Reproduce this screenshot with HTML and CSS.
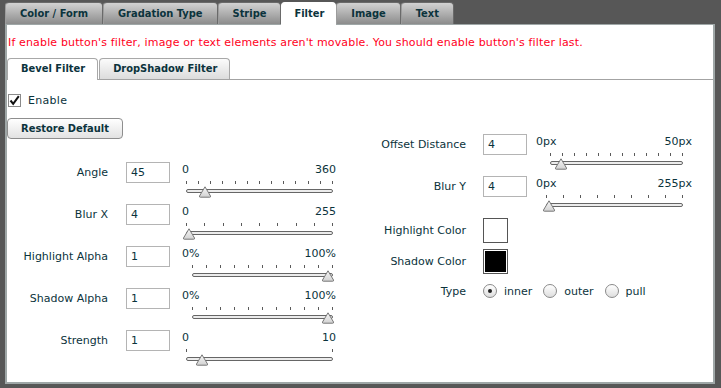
FILE: index.html
```html
<!DOCTYPE html>
<html>
<head>
<meta charset="utf-8">
<link rel="stylesheet" href="styles.css">
</head>
<body>
<div class="app">
  <div class="tabs">
    <div class="tab">Color / Form</div>
    <div class="tab">Gradation Type</div>
    <div class="tab">Stripe</div>
    <div class="tab active">Filter</div>
    <div class="tab">Image</div>
    <div class="tab">Text</div>
  </div>
  <div class="panel">
    <p class="msg">If enable button's filter, image or text elements aren't movable. You should enable button's filter last.</p>
    <div class="subtabs">
      <div class="subtab active">Bevel Filter</div>
      <div class="subtab">DropShadow Filter</div>
    </div>
    <div class="content">
      <div class="col-left">
        <label class="check">
          <span class="box"><svg width="11" height="11" viewBox="0 0 11 11"><path d="M1.5 5.5 L4.2 8.8 L9.8 1.2" fill="none" stroke="#111" stroke-width="2"/></svg></span>
          <span>Enable</span>
        </label>
        <button class="btn">Restore Default</button>
        <div class="rows">
          <div class="row">
            <div class="lbl">Angle</div>
            <div class="inp">45</div>
            <div class="slider">
              <div class="sl-labels"><span>0</span><span>360</span></div>
              <div class="scale">
                <div class="ticks"><i></i><i></i><i></i><i></i><i></i><i></i><i></i><i></i><i></i><i></i><i></i><i></i><i></i></div>
                <div class="track"><span class="thumb" style="left:12.5%"><svg width="13" height="12" viewBox="0 0 13 12"><path d="M6.5 0.8 L12 10 Q12.4 11.2 11.2 11.2 L1.8 11.2 Q0.6 11.2 1 10 Z" fill="url(#g)" stroke="#777" stroke-width="1"/></svg></span></div>
              </div>
            </div>
          </div>
          <div class="row">
            <div class="lbl">Blur X</div>
            <div class="inp">4</div>
            <div class="slider">
              <div class="sl-labels"><span>0</span><span>255</span></div>
              <div class="scale">
                <div class="ticks"><i></i><i></i><i></i><i></i><i></i><i></i><i></i><i></i><i></i></div>
                <div class="track"><span class="thumb" style="left:1.57%"><svg width="13" height="12" viewBox="0 0 13 12"><path d="M6.5 0.8 L12 10 Q12.4 11.2 11.2 11.2 L1.8 11.2 Q0.6 11.2 1 10 Z" fill="url(#g)" stroke="#777" stroke-width="1"/></svg></span></div>
              </div>
            </div>
          </div>
          <div class="row">
            <div class="lbl">Highlight Alpha</div>
            <div class="inp">1</div>
            <div class="slider pct">
              <div class="sl-labels"><span>0%</span><span>100%</span></div>
              <div class="scale">
                <div class="ticks"><i></i><i></i><i></i><i></i><i></i><i></i><i></i><i></i><i></i><i></i><i></i></div>
                <div class="track"><span class="thumb" style="left:97%"><svg width="13" height="12" viewBox="0 0 13 12"><path d="M6.5 0.8 L12 10 Q12.4 11.2 11.2 11.2 L1.8 11.2 Q0.6 11.2 1 10 Z" fill="url(#g)" stroke="#777" stroke-width="1"/></svg></span></div>
              </div>
            </div>
          </div>
          <div class="row">
            <div class="lbl">Shadow Alpha</div>
            <div class="inp">1</div>
            <div class="slider pct">
              <div class="sl-labels"><span>0%</span><span>100%</span></div>
              <div class="scale">
                <div class="ticks"><i></i><i></i><i></i><i></i><i></i><i></i><i></i><i></i><i></i><i></i><i></i></div>
                <div class="track"><span class="thumb" style="left:97%"><svg width="13" height="12" viewBox="0 0 13 12"><path d="M6.5 0.8 L12 10 Q12.4 11.2 11.2 11.2 L1.8 11.2 Q0.6 11.2 1 10 Z" fill="url(#g)" stroke="#777" stroke-width="1"/></svg></span></div>
              </div>
            </div>
          </div>
          <div class="row">
            <div class="lbl">Strength</div>
            <div class="inp">1</div>
            <div class="slider">
              <div class="sl-labels"><span>0</span><span>10</span></div>
              <div class="scale">
                <div class="ticks"><i></i><i></i></div>
                <div class="track"><span class="thumb" style="left:10%"><svg width="13" height="12" viewBox="0 0 13 12"><path d="M6.5 0.8 L12 10 Q12.4 11.2 11.2 11.2 L1.8 11.2 Q0.6 11.2 1 10 Z" fill="url(#g)" stroke="#777" stroke-width="1"/></svg></span></div>
              </div>
            </div>
          </div>
        </div>
      </div>
      <div class="col-right">
        <div class="row r">
          <div class="lbl">Offset Distance</div>
          <div class="inp">4</div>
          <div class="slider px1">
            <div class="sl-labels"><span>0px</span><span>50px</span></div>
            <div class="scale">
              <div class="ticks"><i></i><i></i><i></i><i></i><i></i><i></i><i></i><i></i><i></i><i></i><i></i><i></i></div>
              <div class="track"><span class="thumb" style="left:8%"><svg width="13" height="12" viewBox="0 0 13 12"><path d="M6.5 0.8 L12 10 Q12.4 11.2 11.2 11.2 L1.8 11.2 Q0.6 11.2 1 10 Z" fill="url(#g)" stroke="#777" stroke-width="1"/></svg></span></div>
            </div>
          </div>
        </div>
        <div class="row r">
          <div class="lbl">Blur Y</div>
          <div class="inp">4</div>
          <div class="slider px2">
            <div class="sl-labels"><span>0px</span><span>255px</span></div>
            <div class="scale">
              <div class="ticks"><i></i><i></i><i></i><i></i><i></i><i></i><i></i><i></i><i></i></div>
              <div class="track"><span class="thumb" style="left:1.57%"><svg width="13" height="12" viewBox="0 0 13 12"><path d="M6.5 0.8 L12 10 Q12.4 11.2 11.2 11.2 L1.8 11.2 Q0.6 11.2 1 10 Z" fill="url(#g)" stroke="#777" stroke-width="1"/></svg></span></div>
            </div>
          </div>
        </div>
        <div class="crow">
          <div class="lbl">Highlight Color</div>
          <div class="swatch"><span class="fill white"></span></div>
        </div>
        <div class="crow">
          <div class="lbl">Shadow Color</div>
          <div class="swatch"><span class="fill black"></span></div>
        </div>
        <div class="trow">
          <div class="lbl">Type</div>
          <div class="radios">
            <span class="radio on"></span><span class="rtext">inner</span>
            <span class="radio"></span><span class="rtext">outer</span>
            <span class="radio"></span><span class="rtext">pull</span>
          </div>
        </div>
      </div>
    </div>
  </div>
</div>
<svg width="0" height="0" class="defs">
  <defs>
    <linearGradient id="g" x1="0" y1="0" x2="0" y2="1">
      <stop offset="0" stop-color="#f6f6f6"/>
      <stop offset="1" stop-color="#d2d2d2"/>
    </linearGradient>
  </defs>
</svg>
</body>
</html>
```
FILE: styles.css
```css
* { box-sizing: border-box; }
html, body { margin: 0; }
body {
  background: #575757;
  font-family: "DejaVu Sans", Verdana, sans-serif;
  font-size: 11px;
  color: #0b333c;
  width: 721px;
  height: 388px;
  overflow: hidden;
}
.defs { position: absolute; }
.app { padding: 2px 0 0 5px; width: 715px; }
.tabs { display: flex; height: 22px; }
.tab, .subtab, .btn {
  font-family: "DejaVu Sans Condensed", "DejaVu Sans", sans-serif;
  font-stretch: condensed;
  font-weight: bold;
  font-size: 11px;
}
.tab {
  height: 22px;
  padding: 0 14px;
  line-height: 22px;
  border: 1px solid #6a6a6a;
  border-bottom: 0;
  border-left-color: #9c9c9c;
  border-radius: 4px 4px 0 0;
  background: linear-gradient(#d2d2d2, #8c8c8c);
}
.tab.active {
  background: #fff;
  border-color: #fff;
  padding: 0 11px 0 12px;
  height: 23px;
  position: relative;
  z-index: 1;
}
.panel {
  height: 360px;
  background: #fff;
  border: 2px solid #9fa7a7;
  border-top: 1px solid #9fa7a7;
}
.msg {
  margin: 11px 0 0 1px;
  line-height: 14px;
  letter-spacing: 0.15px;
  color: #ff0022;
}
.subtabs {
  margin-top: 8px;
  display: flex;
  height: 22px;
  border-bottom: 1px solid #a3a3a3;
}
.subtab {
  height: 21px;
  padding: 0 12px 0 13px;
  line-height: 20px;
  border: 1px solid #a8a8a8;
  border-bottom: 0;
  border-radius: 4px 4px 0 0;
  background: linear-gradient(#fbfbfb, #dcdcdc);
  margin-right: 1px;
}
.subtab.active {
  background: #fff;
  height: 22px;
  position: relative;
  z-index: 1;
}
.content {
  display: grid;
  grid-template-columns: 363px 1fr;
}
.col-left { padding-top: 14px; display: flex; flex-direction: column; align-items: flex-start; }
.check { display: flex; align-items: center; gap: 7px; margin-left: 1px; height: 13px; letter-spacing: 0.3px; }
.box {
  width: 13px; height: 13px;
  border: 1px solid #8a8a8a;
  background: #fff;
  display: flex; align-items: center; justify-content: center;
}
.btn {
  margin-top: 11px;
  width: 116px; height: 21px;
  color: #0b333c;
  border: 1px solid #8e8e8e;
  border-radius: 4px;
  background: linear-gradient(#ffffff, #e2e2e2);
  padding: 0;
}
.rows { margin-top: 23px; }
.row { display: flex; height: 42px; align-items: flex-start; }
.lbl { width: 101px; text-align: right; line-height: 21px; white-space: nowrap; }
.inp {
  margin-left: 18px;
  width: 44px; height: 21px;
  border: 1px solid #b4b4b4;
  line-height: 19px;
  padding-left: 4px;
}
.slider { margin-left: 12px; width: 154px; padding-top: 1px; }
.sl-labels { display: flex; justify-content: space-between; height: 14px; line-height: 14px; }
.scale { padding: 0 3px 0 4px; }
.pct .scale { padding-left: 10px; }
.ticks { margin-top: 4px; height: 3px; display: flex; justify-content: space-between; }
.ticks i { width: 1px; height: 3px; background: #5a5a5a; }
.track {
  margin-top: 5px;
  height: 4px;
  border: 1px solid #666;
  border-radius: 2px;
  background: #ececec;
  position: relative;
}
.thumb {
  position: absolute;
  top: -4px;
  width: 13px; height: 12px;
  transform: translateX(-50%);
}
.thumb svg { display: block; }
.col-right { padding-top: 54px; }
.row.r .lbl { width: 96px; }
.row.r .inp { margin-left: 17px; }
.row.r .slider { margin-left: 9px; width: 156px; }
.px1 .scale { padding: 0 9px 0 14px; }
.px2 .scale { padding: 0 9px 0 10px; }
.crow { display: flex; align-items: flex-start; height: 31px; }
.crow .lbl { width: 96px; line-height: 25px; }
.trow .lbl { width: 96px; }
.swatch {
  margin-left: 17px;
  width: 25px; height: 25px;
  border: 1px solid #555;
  padding: 1px;
  background: #fff;
}
.fill { display: block; width: 100%; height: 100%; }
.fill.white { background: #fff; }
.fill.black { background: #000; }
.trow { display: flex; align-items: center; height: 22px; }
.radios { display: flex; align-items: center; margin-left: 17px; }
.radio {
  width: 14px; height: 14px;
  border: 1px solid #8a8a8a;
  border-radius: 50%;
  background: linear-gradient(#ffffff, #dedede);
  position: relative;
}
.radio.on::after {
  content: "";
  position: absolute;
  left: 4px; top: 4px;
  width: 4px; height: 4px;
  border-radius: 50%;
  background: #222;
}
.rtext { margin-left: 7px; margin-right: 11px; }
```
